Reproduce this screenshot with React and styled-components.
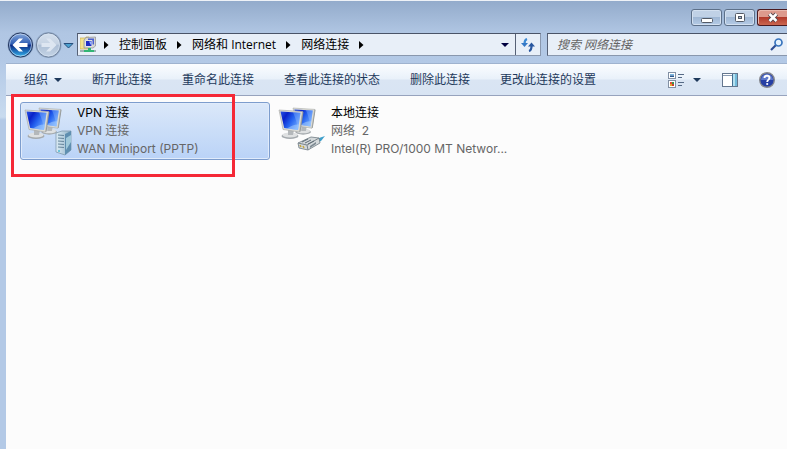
import React from "react";
import styled, { createGlobalStyle, css } from "styled-components";

const GlobalStyle = createGlobalStyle`
  * {
    box-sizing: border-box;
  }

  body {
    margin: 0;
    font-family: "Open Sans", "Noto Sans CJK SC", sans-serif;
    font-size: 12px;
    line-height: 18px;
    background: #b3c9e6;
  }

  button,
  input {
    font: inherit;
  }
`;

const Window = styled.div`
  display: flex;
  flex-direction: column;
  min-height: 100vh;
  border-top: 1px solid #eef2f7;
  background: linear-gradient(#93abcb, #b0c6e3 32px, #b3c9e6 60px, #c9dbef 116px, #b3c9e6 119px);
`;

const TitleBar = styled.header`
  display: flex;
  justify-content: flex-end;
  gap: 2px;
  height: 32px;
  padding-top: 8px;
`;

const CaptionButton = styled.button`
  display: flex;
  align-items: center;
  justify-content: center;
  width: ${(props) => (props.$close ? 30 : 31)}px;
  height: 17px;
  padding: 0;
  border: 1px solid #5d7089;
  border-radius: 3px;
  background: linear-gradient(#c0d1e6 45%, #9fb7d4 50%, #b5cbe6);
  box-shadow: inset 0 0 0 1px #d3e0f0;

  ${(props) =>
    props.$close &&
    css`
      border-color: #4a1a20;
      border-right: 0;
      border-radius: 3px 0 0 3px;
      background: linear-gradient(#dd9a8d 45%, #b23a2b 50%, #cb6750);
      box-shadow: inset 1px 1px 0 #e9b9ae;
    `}
`;

const AddressRow = styled.div`
  display: flex;
  align-items: flex-start;
  gap: 6px;
  height: 24px;
  margin-bottom: 6px;
  padding-left: 7px;
`;

const History = styled.div`
  display: flex;
  align-items: center;
  gap: 1px;
  width: 64px;
  height: 24px;
`;

const NavButton = styled.button`
  display: flex;
  padding: 0;
  border: 0;
  background: none;
`;

const Field = styled.div`
  display: flex;
  align-items: center;
  min-width: 0;
  height: 23px;
  border: 1px solid #8997ad;
  border-top-color: #4a5468;
  border-left-color: #566176;
  background: #e8eff8;
`;

const AddressBar = styled(Field)`
  flex: 1;
  padding-left: 2px;
`;

const Crumbs = styled.nav`
  display: flex;
  flex: 1;
  align-items: center;
  gap: 10px;
  padding-left: 7px;
`;

const Crumb = styled.a`
  color: #000;
  text-decoration: none;
  white-space: nowrap;
`;

const FieldButton = styled.button`
  display: flex;
  align-items: center;
  justify-content: center;
  width: ${(props) => (props.$divided ? 25 : 20)}px;
  height: 21px;
  padding: 0;
  border: 0;
  border-left: ${(props) => (props.$divided ? "1px solid #566176" : "0")};
  background: none;
`;

const SearchBox = styled(Field)`
  width: 240px;
  border-right: 0;

  input {
    flex: 1;
    min-width: 0;
    padding: 0 0 0 9px;
    border: 0;
    outline: 0;
    background: none;
    font-style: italic;
  }

  input::placeholder {
    color: #666;
    opacity: 1;
  }
`;

const Toolbar = styled.div`
  display: flex;
  align-items: center;
  gap: 30px;
  height: 33px;
  margin-left: 6px;
  padding: 0 12px 0 18px;
  border-top: 1px solid #9fb3cf;
  border-bottom: 1px solid #97a3bd;
  background: linear-gradient(#fbfdff, #e9f1fa 48%, #dae5f3 52%, #d8e4f3);
`;

const ToolButton = styled.button`
  display: flex;
  align-items: center;
  gap: ${(props) => (props.$wide ? 9 : 6)}px;
  padding: 0;
  border: 0;
  background: none;
  color: #1e395b;
  white-space: nowrap;
`;

const ToolIcons = styled.div`
  display: flex;
  align-items: center;
  gap: 21px;
  margin-left: auto;
`;

const Content = styled.main`
  position: relative;
  display: flex;
  flex: 1;
  align-items: flex-start;
  gap: 4px;
  margin-left: 6px;
  padding: 6px 14px;
  background: #fcfcfc;
`;

const Connection = styled.button`
  display: flex;
  width: 250px;
  height: 58px;
  padding: 1px 3px;
  gap: 5px;
  border: 1px solid transparent;
  border-radius: 3px;
  background: none;
  font-family: Inter, "Noto Sans CJK SC", sans-serif;
  text-align: left;

  ${(props) =>
    props.$selected &&
    css`
      border-color: #7d9dcd;
      background: linear-gradient(#dbe8f9, #bad3f7);
      box-shadow: inset 0 0 0 1px #e0ebfb;
    `}
`;

const Details = styled.span`
  display: flex;
  flex-direction: column;
  color: #666;
  white-space: pre;
`;

const Name = styled.span`
  color: #000;
`;

const Highlight = styled.div`
  position: absolute;
  top: -2px;
  left: 5px;
  width: 224px;
  height: 83px;
  border: 3px solid #f52836;
  pointer-events: none;
`;

const HistoryIcon = ({ forward }) => (
  <svg width="27" height="28" viewBox="0.5 0 27 28">
    <defs>
      <linearGradient id={forward ? "fwd" : "back"} x2="0" y2="1">
        <stop offset="0" stopColor={forward ? "#d5e0ed" : "#86a9dc"} />
        <stop offset=".45" stopColor={forward ? "#c6d3e3" : "#315fb4"} />
        <stop offset=".52" stopColor={forward ? "#aec0d6" : "#0b2c86"} />
        <stop offset="1" stopColor={forward ? "#c5d4e6" : "#35b5ee"} />
      </linearGradient>
    </defs>
    <circle cx="14" cy="14" r="13" fill="#8fa6c5" />
    <circle cx="14" cy="14" r="12" fill={forward ? "url(#fwd)" : "url(#back)"} stroke={forward ? "#71839d" : "#24365d"} />
    <circle cx="14" cy="14" r="11" fill="none" stroke="#d7e5f5" strokeOpacity=".65" />
    <path
      d="M6 14l6.500-6.500h4L12.300 12H21v4h-8.700l4.200 4.500h-4z"
      fill={forward ? "#dde6f1" : "#fff"}
      transform={forward ? "rotate(180 14 14)" : undefined}
    />
  </svg>
);

const DownArrow = ({ color = "#1e395b" }) => (
  <svg width="8" height="4" viewBox="0 0 8 4">
    <path d="M0 0h8L4 4z" fill={color} />
  </svg>
);

const Chevron = () => (
  <svg width="5" height="8" viewBox="0 0 5 8">
    <path d="M0 0l4.500 4-4.500 4z" fill="#000" />
  </svg>
);

const FolderIcon = () => (
  <svg width="17" height="17" viewBox="0 0 17 17">
    <path d="M0 2h5l1-1h3v12H0z" fill="#f4e38e" stroke="#c8ae4d" strokeWidth=".7" />
    <path d="M6 1.500 15.500 1v9L13 12H4V4z" fill="#d5d5d2" stroke="#8d8f94" strokeWidth=".7" />
    <path d="M8 2.500h6v6H8z" fill="#4a5fd0" />
    <path d="M5.500 4.500h6.500v6H5.500z" fill="#1f2cc4" stroke="#e4e4e0" />
    <path d="m9 5.500 2.500 0v4.500z" fill="#9db8ff" />
    <path d="M8 12h3v2h3v2H4v-2h4z" fill="#32b575" />
    <path d="M0 15h4m10 0h2" stroke="#9fb0b5" strokeWidth="2" />
  </svg>
);

const RefreshIcon = () => (
  <svg width="14" height="14" viewBox="0 0 14 14">
    <path d="M6 1C4.500 1.500 3.500 3 3.500 6" fill="none" stroke="#3c8ad4" strokeWidth="2.200" />
    <path d="M0 5h7L3.500 9z" fill="#3478c6" />
    <path d="M8 13c2-.500 2.500-2 2.500-5" fill="none" stroke="#28569f" strokeWidth="2.200" />
    <path d="M7 8.500h7L10.500 4.500z" fill="#28569f" />
  </svg>
);

const SearchIcon = () => (
  <svg width="14" height="13" viewBox="0 0 14 13">
    <path d="m1 12 5.500-5.500" stroke="#2c4d93" strokeWidth="2.200" />
    <circle cx="8.500" cy="4.500" r="3.500" fill="#e5f2fd" stroke="#3874bd" strokeWidth="1.700" />
  </svg>
);

const ViewsIcon = () => (
  <svg width="16" height="16" viewBox="0 0 16 16">
    <rect x=".5" y=".5" width="7" height="6" fill="#fff" stroke="#8290a4" />
    <rect x=".5" y="8.500" width="7" height="7" fill="#fff" stroke="#8290a4" />
    <path d="M2 2h4v1.500H2z" fill="#79b7e4" />
    <path d="M2 3.500h4V5H2z" fill="#28558a" />
    <path d="M2 10h2v2H2z" fill="#df4b39" />
    <path d="M4 10h2v2H4z" fill="#3b9550" />
    <path d="M2 12h2v2H2z" fill="#e9a82c" />
    <path d="M4 12h2v2H4z" fill="#c9402f" />
    <path d="M10 2.500h6M10 5.500h4M10 10.500h6M10 13.500h4" stroke="#566a86" />
  </svg>
);

const PaneIcon = () => (
  <svg width="16" height="14" viewBox="0 0 16 14">
    <rect x=".5" y=".5" width="15" height="13" fill="#fff" stroke="#64768e" />
    <path d="M1 2.500h9" stroke="#8a9cb4" />
    <path d="M10 1h5v12h-5z" fill="#72bbdb" />
    <path d="M11 1h2v12h-2z" fill="#b4e0f0" />
    <path d="M10.500 1v12" stroke="#426e91" />
  </svg>
);

const HelpIcon = () => (
  <svg width="16" height="16" viewBox="0 0 16 16">
    <circle cx="8" cy="8" r="7.300" fill="#263fa4" stroke="#85878e" strokeWidth="1.400" />
    <path d="M2 8a6 6 0 0 1 12 0z" fill="#5e79cb" />
    <path d="M5.500 6C5.500 3 10.500 3 10.500 6c0 1.600-2.300 1.700-2.300 4" fill="none" stroke="#fff" strokeWidth="1.900" />
    <circle cx="8.200" cy="12" r="1.100" fill="#fff" />
  </svg>
);

const Monitor = () => (
  <g>
    <ellipse cx="11" cy="26" rx="8.500" ry="3" fill="#a5aaae" />
    <ellipse cx="11" cy="25" rx="7.500" ry="2.500" fill="#dfe1e2" />
    <path d="m9 19 6 1-1 5H9z" fill="#b4b8bb" />
    <path d="m23 1.500 1.500 .5-3 19.500-1.500.5z" fill="#8f9496" />
    <path d="M0 0 23.500 1.500 20.500 22 4 19.500z" fill="#dcdcd6" stroke="#a3a5a3" strokeWidth=".6" />
    <path d="M1.500 1.500 21.500 2.800 19 20 5.200 18z" fill="url(#screen)" />
    <path d="m14 2.300 7.500.5-2.400 16.200C18 14 16.500 8 14 2.300z" fill="#a8ccff" fillOpacity=".3" />
    <path d="M8 18.400C13 15 17 14 19.800 14.500L19 20z" fill="#b9dcff" fillOpacity=".45" />
  </g>
);

const ConnectionIcon = ({ server }) => (
  <svg width="48" height="52" viewBox="0 0 48 52">
    <defs>
      <linearGradient id="screen" x2="1" y2=".6">
        <stop offset="0" stopColor="#2a55e6" />
        <stop offset=".3" stopColor="#0a22c8" />
        <stop offset=".6" stopColor="#2360ee" />
        <stop offset="1" stopColor="#6ba6ff" />
      </linearGradient>
      <linearGradient id="tower">
        <stop offset="0" stopColor="#dcecf5" />
        <stop offset="1" stopColor="#8fb0c6" />
      </linearGradient>
    </defs>
    <g transform="translate(15 4) scale(.92)">
      <Monitor />
    </g>
    <g transform="translate(1 6)">
      <Monitor />
    </g>
    {server ? (
      <g>
        <path d="m32 29 6-2 9 0v19l-6 5-9-3z" fill="url(#tower)" stroke="#7893a6" strokeWidth=".7" />
        <path d="m41 30 6-3v19l-6 5z" fill="#5f8fb0" />
        <path d="m42 34 5-3v7l-5 8z" fill="#bce1ed" fillOpacity=".7" />
        <path d="m34 31 6 .5m-6 2.500 6 .5m-6 2.500 6 .5m-6 2.500 6 .5m-6 2.500 6 .5" stroke="#67869b" strokeWidth="1.200" />
        <circle cx="35" cy="47" r="1" fill="#4bbbd5" />
      </g>
    ) : (
      <g>
        <path d="m35 36 12-4-4 5-5 2z" fill="#3f9fca" />
        <path d="m20 39 13-6 8 1 1 5-12 7-9-2z" fill="#d3d8da" stroke="#6f7b83" strokeWidth=".8" />
        <path d="m20 39 9 2 12-7m-12 7 1 5" fill="none" stroke="#7b868d" />
        <path d="m24 38 6-3m-3 4 6-3m-3 4 6-3" stroke="#5e6c76" />
        <path d="m22 41 1 2m2-1 1 2" stroke="#c3a641" strokeWidth="1.500" />
        <path d="m32 42 6-4v2l-6 4z" fill="#7d8a93" />
      </g>
    )}
  </svg>
);

const crumbs = ["控制面板", "网络和 Internet", "网络连接"];

const actions = ["断开此连接", "重命名此连接", "查看此连接的状态", "删除此连接", "更改此连接的设置"];

const connections = [
  { name: "VPN 连接", status: "VPN 连接", device: "WAN Miniport (PPTP)", server: true, selected: true },
  { name: "本地连接", status: "网络  2", device: "Intel(R) PRO/1000 MT Networ..." },
];

const App = () => {
  return (
    <Window>
      <GlobalStyle />
      <TitleBar>
        <CaptionButton aria-label="最小化">
          <svg width="12" height="12" viewBox="0 0 12 12">
            <rect x=".5" y="6.500" width="11" height="4" rx="1" fill="#fff" stroke="#535a66" />
          </svg>
        </CaptionButton>
        <CaptionButton aria-label="最大化">
          <svg width="12" height="11" viewBox="0 0 12 11">
            <rect x="1.500" y="1.500" width="9" height="8" rx="1" fill="#fff" stroke="#535a66" />
            <rect x="4.500" y="4.500" width="3" height="2" fill="#a9bdd6" stroke="#535a66" />
          </svg>
        </CaptionButton>
        <CaptionButton $close aria-label="关闭">
          <svg width="12" height="11" viewBox="0 0 12 11">
            <path d="m2.500 2 7 7m0-7-7 7" stroke="#53464c" strokeWidth="4.500" />
            <path d="m2.500 2 7 7m0-7-7 7" stroke="#fff" strokeWidth="2.500" />
          </svg>
        </CaptionButton>
      </TitleBar>

      <AddressRow>
        <History>
          <NavButton aria-label="后退">
            <HistoryIcon />
          </NavButton>
          <NavButton aria-label="前进">
            <HistoryIcon forward />
          </NavButton>
          <NavButton aria-label="最近的页面">
            <svg width="11" height="7" viewBox="0 0 11 7">
              <path d="M1 1.500h9L5.500 6z" fill="#4ba0cf" stroke="#264e7c" />
            </svg>
          </NavButton>
        </History>
        <AddressBar>
          <FolderIcon />
          <Crumbs>
            <Chevron />
            {crumbs.map((crumb) => (
              <React.Fragment key={crumb}>
                <Crumb href="#">{crumb}</Crumb>
                <Chevron />
              </React.Fragment>
            ))}
          </Crumbs>
          <FieldButton aria-label="以前的位置">
            <DownArrow color="#000040" />
          </FieldButton>
          <FieldButton $divided aria-label="刷新">
            <RefreshIcon />
          </FieldButton>
        </AddressBar>
        <SearchBox>
          <input type="text" placeholder="搜索 网络连接" aria-label="搜索 网络连接" />
          <FieldButton aria-label="搜索">
            <SearchIcon />
          </FieldButton>
        </SearchBox>
      </AddressRow>

      <Toolbar>
        <ToolButton>
          组织
          <DownArrow />
        </ToolButton>
        {actions.map((action) => (
          <ToolButton key={action}>{action}</ToolButton>
        ))}
        <ToolIcons>
          <ToolButton $wide aria-label="更改视图">
            <ViewsIcon />
            <DownArrow />
          </ToolButton>
          <ToolButton aria-label="预览窗格">
            <PaneIcon />
          </ToolButton>
          <ToolButton aria-label="帮助">
            <HelpIcon />
          </ToolButton>
        </ToolIcons>
      </Toolbar>

      <Content>
        {connections.map((item) => (
          <Connection key={item.name} $selected={item.selected}>
            <ConnectionIcon server={item.server} />
            <Details>
              <Name>{item.name}</Name>
              <span>{item.status}</span>
              <span>{item.device}</span>
            </Details>
          </Connection>
        ))}
        <Highlight />
      </Content>
    </Window>
  );
};

export default App;
